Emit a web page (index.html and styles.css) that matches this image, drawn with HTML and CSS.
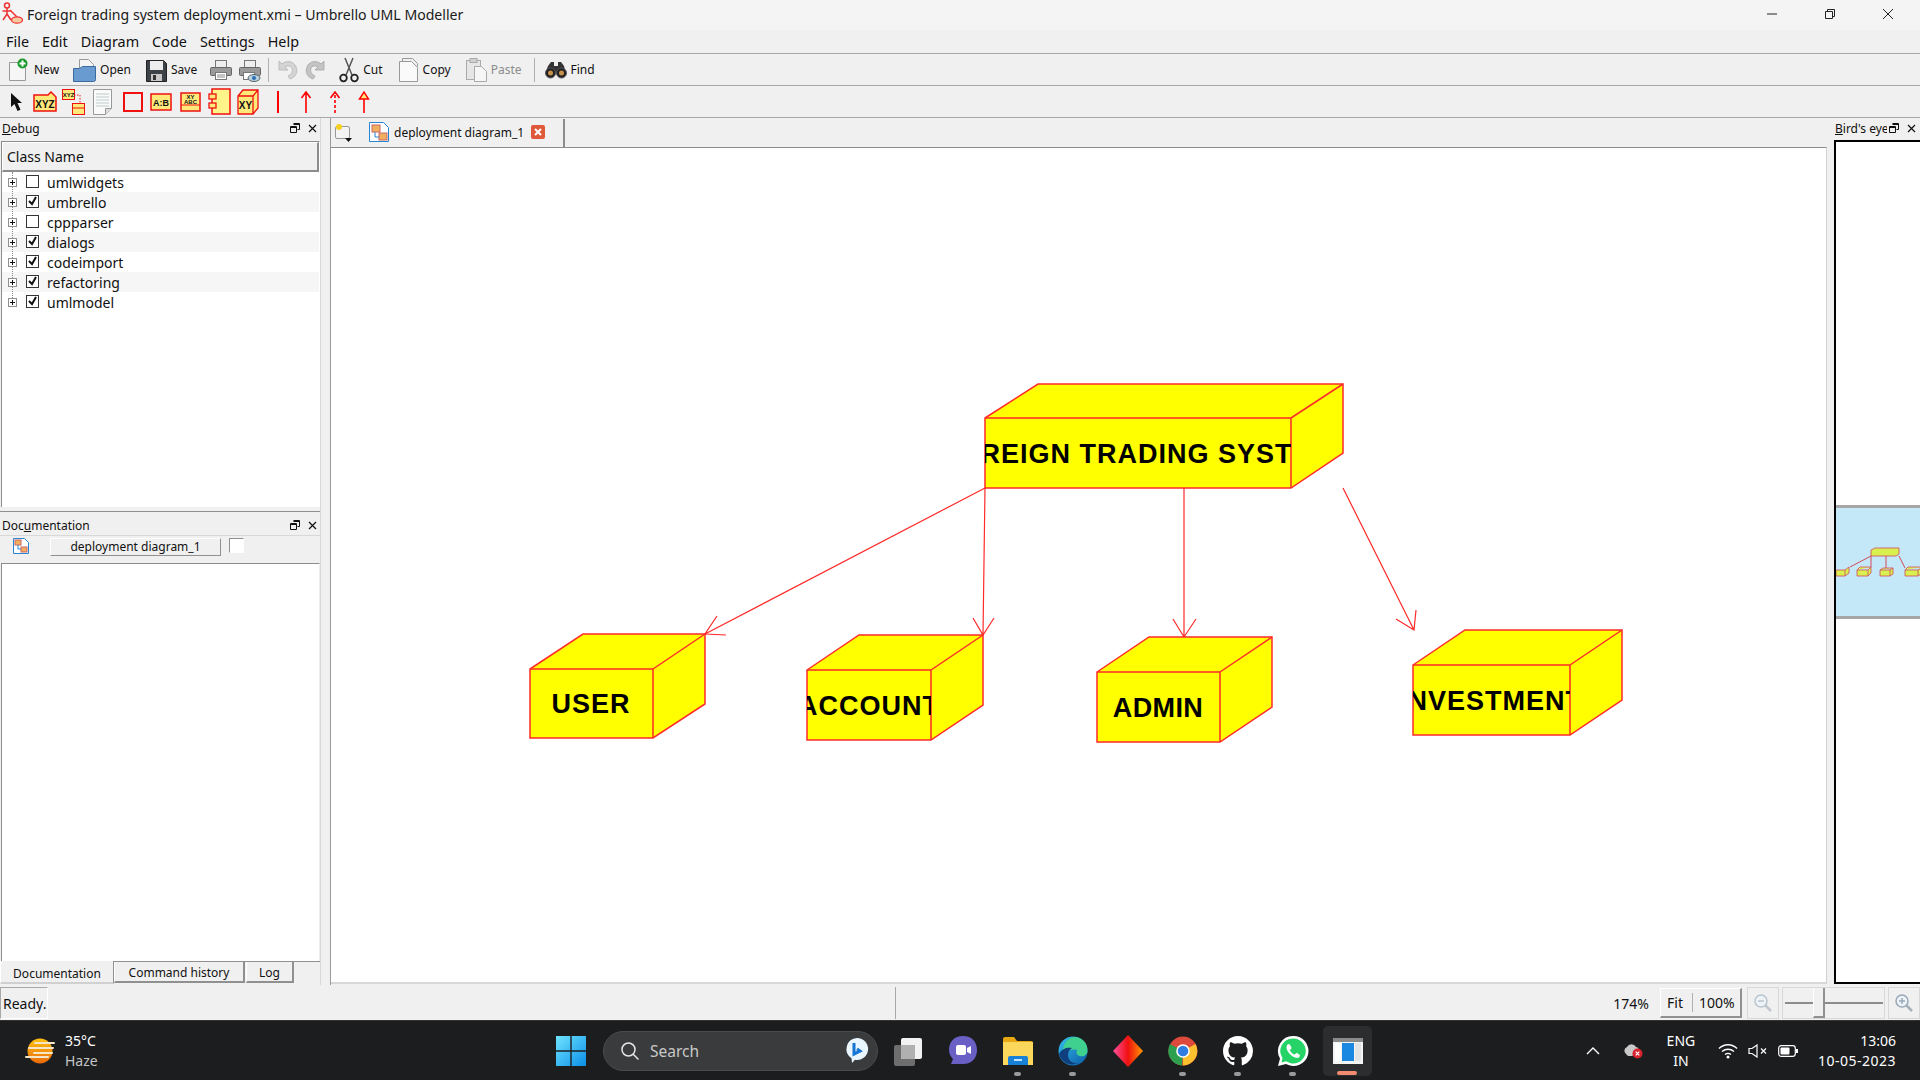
FILE: index.html
```html
<!DOCTYPE html>
<html lang="en">
<head>
    <meta charset="UTF-8">
    <title>Foreign trading system deployment.xmi – Umbrello UML Modeller</title>
    <link rel="stylesheet" href="styles.css">
</head>
<body>

    <!-- Title bar -->
    <div class="titlebar">
        <svg class="app-icon" width="24" height="24" viewBox="0 0 24 24"><circle cx="6" cy="3.5" r="2.5" fill="none" stroke="#e33" stroke-width="1.5"/><path d="M6 6v6M1.5 9h9M6 12l-4 6M6 12l4 6M9 8l7 7" fill="none" stroke="#e33" stroke-width="1.5"/><ellipse cx="16" cy="18" rx="5.5" ry="3.2" fill="#f6c9a0" stroke="#e33" stroke-width="1.3"/></svg>
        <span class="title-text">Foreign trading system deployment.xmi – Umbrello UML Modeller</span>
        <div class="window-controls">
            <svg width="12" height="12" viewBox="0 0 12 12"><path d="M1 6h10" stroke="#222" stroke-width="1"/></svg>
            <svg width="12" height="12" viewBox="0 0 12 12"><path d="M1.5 3.5h7v7h-7zM3.5 3.5v-2h7v7h-2" fill="none" stroke="#222" stroke-width="1"/></svg>
            <svg width="12" height="12" viewBox="0 0 12 12"><path d="M1 1l10 10M11 1L1 11" stroke="#222" stroke-width="1"/></svg>
        </div>
    </div>

    <!-- Menu -->
    <div class="menubar">
        <span>File</span><span>Edit</span><span>Diagram</span><span>Code</span><span>Settings</span><span>Help</span>
    </div>

    <!-- Main toolbar -->
    <div class="toolbar">
        <div class="tool tool-new">
            <svg width="22" height="24" viewBox="0 0 22 24"><path d="M1.5 4.5h11l5 5v13h-16z" fill="#f6f6f6" stroke="#999"/><circle cx="14.5" cy="5.500" r="5" fill="#1a9a2c"/><path d="M14.5 2.5v6M11.5 5.500h6" stroke="#fff" stroke-width="2"/></svg>
            <span>New</span>
        </div>
        <div class="tool tool-open">
            <svg width="23" height="24" viewBox="0 0 23 24"><path d="M6.5 1.5h9l5 5v8h-14z" fill="#f4f4f4" stroke="#999"/><path d="M.5 10.5h6l3-2h13v13a2 2 0 0 1-2 2H.5z" fill="#6a9bd0" stroke="#3b6aa0"/></svg>
            <span>Open</span>
        </div>
        <div class="tool tool-save">
            <svg width="21" height="24" viewBox="0 0 21 24"><path d="M.5 2.5h17l3 3v18H.5z" fill="#3d4248" stroke="#222"/><rect x="4" y="3" width="13" height="9" fill="#eee"/><rect x="5" y="16" width="11" height="7" fill="#c8c8c8"/><rect x="7" y="17" width="3" height="5" fill="#333"/></svg>
            <span>Save</span>
        </div>
        <svg class="tool-print" width="22" height="24" viewBox="0 0 22 24"><rect x="5.5" y="2.5" width="11" height="8" fill="#eee" stroke="#777"/><rect x=".5" y="9.5" width="21" height="8" rx="1" fill="#9a9a9a" stroke="#666"/><rect x="5.5" y="14.5" width="11" height="7" fill="#fff" stroke="#777"/><path d="M7 17h8M7 19h8" stroke="#888"/></svg>
        <svg class="tool-preview" width="22" height="24" viewBox="0 0 22 24"><rect x="5.5" y="2.5" width="11" height="8" fill="#eee" stroke="#777"/><rect x=".5" y="9.5" width="21" height="8" rx="1" fill="#9a9a9a" stroke="#666"/><rect x="4.5" y="14.5" width="11" height="7" fill="#fff" stroke="#777"/><ellipse cx="15" cy="20" rx="6" ry="3.5" fill="#b8cfe0" stroke="#566"/><circle cx="15" cy="20" r="2" fill="#2a6fb0"/></svg>
        <div class="sep sep-a"></div>
        <svg class="tool-undo" width="22" height="22" viewBox="0 0 22 22"><path d="M3 2v9h9L9 8c3-2 6-1 7 1 1 3 0 6-4 8l2 3c6-2 8-7 6-12C18 2 10 1 6 5z" fill="#d4d4d4" stroke="#bdbdbd"/></svg>
        <svg class="tool-redo" width="22" height="22" viewBox="0 0 22 22"><path d="M19 2v9h-9l3-3c-3-2-6-1-7 1-1 3 0 6 4 8l-2 3C2 18 0 13 2 8 4 2 12 1 16 5z" fill="#c4c4c4" stroke="#b0b0b0"/></svg>
        <div class="tool tool-cut">
            <svg width="20" height="26" viewBox="0 0 20 26"><path d="M6 1l7 17M14 1L7 18" stroke="#555" stroke-width="1.5" fill="none"/><circle cx="4.5" cy="21" r="3.3" fill="none" stroke="#222" stroke-width="1.8"/><circle cx="15.5" cy="21" r="3.3" fill="none" stroke="#222" stroke-width="1.8"/></svg>
            <span>Cut</span>
        </div>
        <div class="tool tool-copy">
            <svg width="20" height="24" viewBox="0 0 20 24"><path d="M3.5 3.5v-3h10l5 5v3" fill="none" stroke="#999"/><path d="M.5 3.5h12l6 6v14H.5z" fill="#fafafa" stroke="#999"/></svg>
            <span>Copy</span>
        </div>
        <div class="tool tool-paste disabled">
            <svg width="21" height="24" viewBox="0 0 21 24"><rect x=".5" y="2.5" width="14" height="19" fill="#e6e6e6" stroke="#aaa"/><rect x="4" y=".5" width="7" height="4" fill="#d0d0d0" stroke="#aaa"/><path d="M8.5 8.5h7l5 5v10h-12z" fill="#f6f6f6" stroke="#aaa"/></svg>
            <span>Paste</span>
        </div>
        <div class="sep sep-b"></div>
        <div class="tool tool-find">
            <svg width="22" height="18" viewBox="0 0 22 18"><path d="M3 5l3-4h3v4h4V1h3l3 4 2 8H0z" fill="#333"/><circle cx="5.5" cy="12" r="5" fill="#222" stroke="#555"/><circle cx="16.5" cy="12" r="5" fill="#222" stroke="#555"/><circle cx="5.5" cy="12" r="2.5" fill="#c7924b"/><circle cx="16.5" cy="12" r="2.5" fill="#c7924b"/></svg>
            <span>Find</span>
        </div>
    </div>

    <!-- Diagram toolbar -->
    <div class="toolbar toolbar-diagram">
        <svg class="dt-arrow" width="14" height="20" viewBox="0 0 14 20"><path d="M1 1v14l3.5-3 3 7 3-1.300-3-6.700H12z" fill="#111"/></svg>
        <svg class="dt-xyz" width="24" height="22" viewBox="0 0 24 22"><path d="M1 4h14l3-3 5 5v14H1z" fill="#ffe97a" stroke="#e11" stroke-width="1.5"/><text x="12" y="17" class="icon-text-lg">XYZ</text></svg>
        <svg class="dt-inst" width="23" height="26" viewBox="0 0 23 26"><rect x=".5" y=".5" width="12" height="10" fill="#ffe97a" stroke="#e11"/><text x="6.5" y="8" class="icon-text-sm">XYZ</text><path d="M12 6h6v8" fill="none" stroke="#e11" stroke-dasharray="1.5 1.5"/><rect x="10.5" y="14.5" width="12" height="11" fill="#ffe97a" stroke="#e11"/><path d="M11 19h11" stroke="#e11"/></svg>
        <svg class="dt-note" width="20" height="26" viewBox="0 0 20 26"><path d="M.5.5h18v19l-6 6H.5z" fill="#fafafa" stroke="#999"/><path d="M3 5h13M3 8h13M3 11h13M3 14h13M3 17h13" stroke="#bcc"/><path d="M12.5 25.5v-6h6" fill="#ddd" stroke="#999"/></svg>
        <div class="dt-box"></div>
        <svg class="dt-ab" width="22" height="18" viewBox="0 0 22 18"><rect x="1" y="1" width="20" height="16" fill="#ffe97a" stroke="#e11" stroke-width="1.5"/><text x="11" y="12.5" class="icon-text-md">A:B</text></svg>
        <svg class="dt-abc" width="21" height="20" viewBox="0 0 21 20"><rect x="1" y="1" width="19" height="18" fill="#ffe97a" stroke="#e11" stroke-width="1.5"/><path d="M1 13h19" stroke="#e11"/><text x="10.5" y="7" class="icon-text-sm">XY</text><text x="10.5" y="12" class="icon-text-sm">ABC</text></svg>
        <svg class="dt-comp" width="23" height="27" viewBox="0 0 23 27"><rect x="4" y="1" width="18" height="25" fill="#fff48a" stroke="#e11" stroke-width="1.5"/><rect x="1" y="6" width="7" height="5" fill="#ffe97a" stroke="#e11" stroke-width="1.3"/><rect x="1" y="15" width="7" height="5" fill="#ffe97a" stroke="#e11" stroke-width="1.3"/></svg>
        <svg class="dt-node" width="22" height="26" viewBox="0 0 22 26"><path d="M1 7h15v18H1zM1 7l5-6h15v18l-5 6M16 7l5-6" fill="#ffe97a" stroke="#e11" stroke-width="1.3"/><text x="8.5" y="20" class="icon-text-lg">XY</text></svg>
        <div class="dt-line"></div>
        <svg class="dt-assoc" width="12" height="22" viewBox="0 0 12 22"><path d="M6 22V1M1.5 7L6 1l4.500 6" fill="none" stroke="#f00" stroke-width="1.6"/></svg>
        <svg class="dt-dep" width="12" height="22" viewBox="0 0 12 22"><path d="M6 22V1" stroke="#f00" stroke-width="1.6" stroke-dasharray="3 2"/><path d="M1.5 7L6 1l4.500 6" fill="none" stroke="#f00" stroke-width="1.6"/></svg>
        <svg class="dt-gen" width="12" height="22" viewBox="0 0 12 22"><path d="M6 22V8" stroke="#f00" stroke-width="1.6"/><path d="M1.5 8L6 1l4.500 7z" fill="#ffe97a" stroke="#f00" stroke-width="1.4"/></svg>
    </div>

    <div class="workspace">

        <!-- Left docks -->
        <div class="left-docks">
            <div class="dock-title">
                <span><u>D</u>ebug</span>
                <div class="dock-btns">
                    <svg width="10" height="10" viewBox="0 0 10 10"><path d="M3.5 .5h6v6h-2M.5 3.5h6v6h-6z" fill="none" stroke="#111"/><path d="M3.5 1.5h6M.5 4.5h6" stroke="#111"/></svg>
                    <svg width="9" height="9" viewBox="0 0 9 9"><path d="M1 1l7 7M8 1L1 8" stroke="#111" stroke-width="1.2"/></svg>
                </div>
            </div>
            <div class="debug-body">
                <div class="list-header">Class Name</div>
                <div class="tree">
                    <div class="tree-row"><i class="expander"></i><i class="check"></i><span>umlwidgets</span></div>
                    <div class="tree-row"><i class="expander"></i><i class="check on"></i><span>umbrello</span></div>
                    <div class="tree-row"><i class="expander"></i><i class="check"></i><span>cppparser</span></div>
                    <div class="tree-row"><i class="expander"></i><i class="check on"></i><span>dialogs</span></div>
                    <div class="tree-row"><i class="expander"></i><i class="check on"></i><span>codeimport</span></div>
                    <div class="tree-row"><i class="expander"></i><i class="check on"></i><span>refactoring</span></div>
                    <div class="tree-row"><i class="expander"></i><i class="check on"></i><span>umlmodel</span></div>
                </div>
            </div>
            <div class="dock-split"></div>
            <div class="dock-title dock-title-doc">
                <span>Doc<u>u</u>mentation</span>
                <div class="dock-btns">
                    <svg width="10" height="10" viewBox="0 0 10 10"><path d="M3.5 .5h6v6h-2M.5 3.5h6v6h-6z" fill="none" stroke="#111"/><path d="M3.5 1.5h6M.5 4.5h6" stroke="#111"/></svg>
                    <svg width="9" height="9" viewBox="0 0 9 9"><path d="M1 1l7 7M8 1L1 8" stroke="#111" stroke-width="1.2"/></svg>
                </div>
            </div>
            <div class="doc-head">
                <svg class="diagram-icon" width="16" height="16" viewBox="0 0 16 16"><path d="M.5.5h11l4 4v11H.5z" fill="#fff" stroke="#2a85d0"/><rect x="2" y="2" width="6" height="5" fill="#f0b060" stroke="#c66"/><rect x="8" y="9" width="6" height="5" fill="#f0b060" stroke="#c66"/><path d="M5 7v4h3" fill="none" stroke="#2a85d0"/></svg>
                <div class="doc-name">deployment diagram_1</div>
                <div class="doc-check"></div>
            </div>
            <div class="doc-body"></div>
            <div class="dock-tabs">
                <div class="dock-tab active">Documentation</div>
                <div class="dock-tab tab-history">Command history</div>
                <div class="dock-tab tab-log">Log</div>
            </div>
        </div>

        <!-- Diagram area -->
        <div class="center">
            <div class="tabbar">
                <svg class="new-tab" width="20" height="20" viewBox="0 0 20 20"><rect x="1.5" y="3.5" width="14" height="12" rx="1.5" fill="#f4f4f4" stroke="#999"/><circle cx="5" cy="4" r="3" fill="#f5d020"/><path d="M11 15h7l-3.500 4z" fill="#111"/></svg>
                <div class="diagram-tab">
                    <svg width="20" height="20" viewBox="0 0 20 20"><path d="M.5.5h14l5 5v14H.5z" fill="#fff" stroke="#2a85d0"/><rect x="3" y="3" width="8" height="7" fill="#f0b060" stroke="#c66"/><rect x="10" y="11" width="8" height="7" fill="#f0b060" stroke="#c66"/><path d="M6 10v5h4" fill="none" stroke="#2a85d0"/></svg>
                    <span>deployment diagram_1</span>
                    <svg class="tab-close" width="14" height="14" viewBox="0 0 14 14"><rect width="14" height="14" rx="2" fill="#e0583a"/><path d="M4 4l6 6M10 4l-6 6" stroke="#fff" stroke-width="2"/></svg>
                </div>
            </div>
            <div class="canvas">
                <svg class="diagram" width="1495" height="835" viewBox="331 148 1495 835">
                    <defs>
                        <clipPath id="c-main"><rect x="985" y="418" width="306" height="70"/></clipPath>
                        <clipPath id="c-user"><rect x="530" y="669" width="123" height="69"/></clipPath>
                        <clipPath id="c-acc"><rect x="807" y="670" width="124" height="70"/></clipPath>
                        <clipPath id="c-adm"><rect x="1097" y="672" width="123" height="70"/></clipPath>
                        <clipPath id="c-inv"><rect x="1413" y="665" width="157" height="70"/></clipPath>
                    </defs>

                    <!-- associations -->
                    <g class="assoc">
                        <path d="M985 488L705 634M717 616L705 634L726 635"/>
                        <path d="M985 488L983 635M973 618L983 635L994 618"/>
                        <path d="M1184 488V637M1173 619L1184 637L1196 619"/>
                        <path d="M1343 488L1414 630M1396 619L1414 630L1416 610"/>
                    </g>

                    <!-- nodes -->
                    <g class="node">
                        <path d="M985 418L1038 384H1343V453L1291 488H985Z"/>
                        <path d="M985 418H1291V488M1291 418L1343 384"/>
                        <text class="node-name" x="1138" y="463" clip-path="url(#c-main)">FOREIGN TRADING SYSTEM</text>
                    </g>
                    <g class="node">
                        <path d="M530 669L583 634H705V704L653 738H530Z"/>
                        <path d="M530 669H653V738M653 669L705 634"/>
                        <text class="node-name" x="591" y="713" clip-path="url(#c-user)">USER</text>
                    </g>
                    <g class="node">
                        <path d="M807 670L859 635H983V705L931 740H807Z"/>
                        <path d="M807 670H931V740M931 670L983 635"/>
                        <text class="node-name" x="869" y="715" clip-path="url(#c-acc)">ACCOUNT</text>
                    </g>
                    <g class="node">
                        <path d="M1097 672L1149 637H1272V707L1220 742H1097Z"/>
                        <path d="M1097 672H1220V742M1220 672L1272 637"/>
                        <text class="node-name name-tight" x="1158" y="717" clip-path="url(#c-adm)">ADMIN</text>
                    </g>
                    <g class="node">
                        <path d="M1413 665L1465 630H1622V700L1570 735H1413Z"/>
                        <path d="M1413 665H1570V735M1570 665L1622 630"/>
                        <text class="node-name" x="1491" y="710" clip-path="url(#c-inv)">INVESTMENT</text>
                    </g>
                </svg>
            </div>
        </div>

        <!-- Bird's eye -->
        <div class="birds-eye">
            <div class="dock-title bird-title">
                <span class="bird-label"><u>B</u>ird's eye</span>
                <div class="dock-btns">
                    <svg width="10" height="10" viewBox="0 0 10 10"><path d="M3.5 .5h6v6h-2M.5 3.5h6v6h-6z" fill="none" stroke="#111"/><path d="M3.5 1.5h6M.5 4.5h6" stroke="#111"/></svg>
                    <svg width="9" height="9" viewBox="0 0 9 9"><path d="M1 1l7 7M8 1L1 8" stroke="#111" stroke-width="1.2"/></svg>
                </div>
            </div>
            <div class="bird-view">
                <div class="bird-blank bird-top"></div>
                <div class="bird-focus">
                    <svg width="85" height="108" viewBox="1835 507 85 108">
                        <g class="mini-links"><path d="M1870 555L1849 566M1870 555V566M1885 555V567M1898 555L1904 567"/></g>
                        <g class="mini-node"><path d="M1870 549L1874 547H1898V553L1895 555H1870Z"/><path d="M1835 569H1844V575H1835ZM1844 569L1848 566V572L1844 575"/><path d="M1856 569H1867V575H1856ZM1867 569L1870 566V572L1867 575M1856 569L1859 566H1870"/><path d="M1879 569H1889V575H1879ZM1889 569L1892 567V573L1889 575M1879 569L1882 567H1892"/><path d="M1904 569H1917V575H1904ZM1917 569L1920 567V573L1917 575M1904 569L1907 566H1920"/></g>
                    </svg>
                </div>
                <div class="bird-blank"></div>
            </div>
        </div>
    </div>

    <!-- Status bar -->
    <div class="statusbar">
        <div class="status-msg">Ready.</div>
        <div class="status-fill"></div>
        <div class="zoom-pct">174%</div>
        <div class="zoom-fit"><span>Fit</span><span class="zoom-100">100%</span></div>
        <div class="zoom-btn"><svg width="20" height="20" viewBox="0 0 20 20"><circle cx="8" cy="8" r="6" fill="#eef3f8" stroke="#b8c4ce" stroke-width="1.5"/><path d="M5 8h6" stroke="#b8c4ce" stroke-width="1.5"/><path d="M12.5 12.5L18 18" stroke="#c0c6cc" stroke-width="2.5"/></svg></div>
        <div class="zoom-slider"><div class="zoom-knob"></div></div>
        <div class="zoom-btn zoom-btn-in"><svg width="20" height="20" viewBox="0 0 20 20"><circle cx="8" cy="8" r="6" fill="#eef3f8" stroke="#98a8b8" stroke-width="1.5"/><path d="M5 8h6M8 5v6" stroke="#98a8b8" stroke-width="1.5"/><path d="M12.5 12.5L18 18" stroke="#a8b0b8" stroke-width="2.5"/></svg></div>
    </div>

    <!-- Windows taskbar -->
    <div class="taskbar">
        <div class="weather">
            <svg width="30" height="28" viewBox="0 0 30 28"><defs><linearGradient id="sun" x1="0" y1="0" x2="0" y2="1"><stop offset="0" stop-color="#ffc20e"/><stop offset="1" stop-color="#e8690c"/></linearGradient></defs><circle cx="15" cy="14" r="12.5" fill="url(#sun)"/><path d="M10 6h19M4 11h24M9 16h18M1 20h22" stroke="#f4e6c6" stroke-width="2" stroke-linecap="round"/></svg>
            <div class="weather-text"><div>35°C</div><div class="muted">Haze</div></div>
        </div>
        <div class="task-center">
            <svg class="win-logo" width="30" height="30" viewBox="0 0 30 30"><defs><linearGradient id="win" x1="0" y1="0" x2="1" y2="1"><stop offset="0" stop-color="#6fe4ff"/><stop offset="1" stop-color="#0a8fe8"/></linearGradient></defs><path d="M0 0h14.3v14.3H0zM15.7 0H30v14.3H15.7zM0 15.7h14.3V30H0zM15.7 15.7H30V30H15.7z" fill="url(#win)"/></svg>
            <div class="search-pill">
                <svg width="20" height="20" viewBox="0 0 20 20"><circle cx="8.5" cy="8.5" r="6.5" fill="none" stroke="#e6e6e6" stroke-width="1.5"/><path d="M13 13l5.5 5.5" stroke="#e6e6e6" stroke-width="1.5"/></svg>
                <span>Search</span>
                <svg class="bing" width="26" height="27" viewBox="0 0 26 27"><path d="M13 1a11 11 0 1 1-2 21.800l-3 3.200-.5-4.800A11 11 0 0 1 13 1z" fill="#eaf6ff"/><path d="M10 6v11l6-3-3-2" fill="none" stroke="#1574d4" stroke-width="3"/></svg>
            </div>
            <div class="task-icon">
                <svg width="30" height="30" viewBox="0 0 30 30"><rect x="1" y="9" width="21" height="21" rx="2" fill="#6e6e6e"/><rect x="8" y="2" width="21" height="21" rx="2" fill="#f2f2f2"/><rect x="8" y="9" width="14" height="14" fill="#b0b0b0"/></svg>
            </div>
            <div class="task-icon">
                <svg width="30" height="32" viewBox="0 0 30 32"><path d="M15 1c9 0 14 6 14 14s-5 14-14 14H3l2-5c-3-3-4-6-4-9C1 7 6 1 15 1z" fill="#6a5fc4"/><rect x="8" y="10" width="10" height="10" rx="2" fill="#fff"/><path d="M19 13l4-2v8l-4-2z" fill="#fff"/></svg>
            </div>
            <div class="task-icon running">
                <svg width="30" height="30" viewBox="0 0 30 30"><path d="M0 3a2 2 0 0 1 2-2h9l3 4h14a2 2 0 0 1 2 2v21H0z" fill="#e9a713"/><rect y="6" width="30" height="23" fill="#fbd75b"/><path d="M5 29v-7a2 2 0 0 1 2-2h16a2 2 0 0 1 2 2v7z" fill="#1681d6"/><path d="M11 24h8" stroke="#bfe3ff" stroke-width="2"/></svg>
            </div>
            <div class="task-icon running">
                <svg width="30" height="30" viewBox="0 0 30 30"><defs><linearGradient id="edge" x1="0" y1="0" x2="1" y2="1"><stop offset="0" stop-color="#35c1f1"/><stop offset="1" stop-color="#0c59a4"/></linearGradient></defs><circle cx="15" cy="15" r="14.5" fill="url(#edge)"/><path d="M16 1C24 1 30 7 29.500 15c0 4-4 6-8 5-3-1-4-4-2-6-6-2-13 1-14 8C3 13 7 2 16 1z" fill="#3fcf8e"/><path d="M10 19c0 5 4 9 10 8-8 4-17-1-19-9 3-6 9-7 13-6-3 2-4 4-4 7z" fill="#0f3f7e"/></svg>
            </div>
            <div class="task-icon">
                <svg width="30" height="32" viewBox="0 0 30 32"><defs><linearGradient id="dia" x1="0" y1="0" x2="1" y2="0"><stop offset="0" stop-color="#ff4fa0"/><stop offset=".5" stop-color="#f01010"/><stop offset="1" stop-color="#ff9a00"/></linearGradient></defs><path d="M15 0l15 16-15 16L0 16z" fill="url(#dia)"/></svg>
            </div>
            <div class="task-icon running">
                <svg width="30" height="30" viewBox="0 0 30 30"><circle cx="15" cy="15" r="14.5" fill="#dd4a3b"/><path d="M15 15L27.5 8a14.5 14.5 0 0 1-12.500 21.500z" fill="#fbc02d"/><path d="M15 15l-1 14.500A14.500 14.500 0 0 1 2 8z" fill="#2e9e4f"/><circle cx="15" cy="15" r="6.8" fill="#fff"/><circle cx="15" cy="15" r="5.3" fill="#2f7de1"/></svg>
            </div>
            <div class="task-icon running">
                <svg width="30" height="30" viewBox="0 0 16 16"><path fill="#fff" d="M8 0C3.580 0 0 3.580 0 8c0 3.540 2.290 6.530 5.470 7.590.4.070.55-.17.55-.38 0-.19-.01-.82-.01-1.490-2.010.37-2.530-.49-2.690-.94-.09-.23-.48-.94-.82-1.130-.28-.15-.68-.52-.01-.53.630-.01 1.080.580 1.230.820.720 1.210 1.870.870 2.330.660.070-.520.280-.870.510-1.070-1.780-.2-3.640-.89-3.640-3.950 0-.870.310-1.590.820-2.150-.080-.2-.360-1.020.080-2.120 0 0 .670-.210 2.200.820.640-.180 1.320-.270 2-.270s1.360.090 2 .270c1.530-1.040 2.200-.820 2.200-.820.440 1.100.160 1.920.080 2.120.510.560.820 1.270.820 2.150 0 3.070-1.870 3.750-3.650 3.950.290.250.540.730.540 1.480 0 1.070-.010 1.930-.010 2.200 0 .210.150.460.550.380A8.010 8.010 0 0 0 16 8c0-4.420-3.580-8-8-8z"/></svg>
            </div>
            <div class="task-icon running">
                <svg width="32" height="32" viewBox="0 0 32 32"><path d="M16 1a15 15 0 0 0-13 22.500L1 31l8-2A15 15 0 1 0 16 1z" fill="#fff"/><path d="M16 3.500A12.500 12.500 0 0 0 5.500 23l-1 4.500 4.700-1.200A12.500 12.500 0 1 0 16 3.500z" fill="#25d366"/><path d="M11.500 9c-1 0-2 2-2 3.500 0 4 5.500 10 10.500 10.500 1.500 0 3-1.500 3-2.500 0-1-3-2.500-3.500-2.500s-1.500 1.500-2 1.500c-1.500 0-4.500-3-4.500-4.500 0-.5 1.500-1 1.500-2s-1.500-4-3-4z" fill="#fff"/></svg>
            </div>
            <div class="task-icon active">
                <svg width="30" height="26" viewBox="0 0 30 26"><rect width="30" height="26" fill="#f4f4f4"/><rect width="30" height="4" fill="#8a8a8a"/><rect x="2" y="5" width="6" height="18" fill="#fff"/><rect x="9" y="5" width="12" height="18" fill="#1a88e0"/><rect x="22" y="5" width="6" height="18" fill="#e4e4e4"/></svg>
            </div>
        </div>
        <div class="tray">
            <svg class="tray-chev" width="14" height="8" viewBox="0 0 14 8"><path d="M1 7l6-6 6 6" fill="none" stroke="#fff" stroke-width="1.4"/></svg>
            <svg class="tray-cloud" width="20" height="16" viewBox="0 0 20 16"><path d="M3 11a4 4 0 0 1 1-7 5 5 0 0 1 9 0 3 3 0 0 1 2 5l-6 4H5z" fill="#c8c8c8"/><circle cx="14.5" cy="10.5" r="5" fill="#d8232f"/><path d="M12.700 8.700l3.600 3.600M16.300 8.700l-3.600 3.600" stroke="#fff" stroke-width="1.2"/></svg>
            <div class="tray-lang"><div>ENG</div><div>IN</div></div>
            <svg class="tray-wifi" width="20" height="16" viewBox="0 0 20 16"><path d="M1 5.500c5-5 13-5 18 0M4 8.500c3.500-3 8.500-3 12 0M7 11.500c2-1.500 4-1.500 6 0" fill="none" stroke="#fff" stroke-width="1.4"/><circle cx="10" cy="14" r="1.5" fill="#fff"/></svg>
            <svg class="tray-vol" width="20" height="14" viewBox="0 0 20 14"><path d="M1 4.500h3L9 1v12L4 9.500H1z" fill="none" stroke="#fff" stroke-width="1.2"/><path d="M13 4.500l5 5M18 4.500l-5 5" stroke="#fff" stroke-width="1.2"/></svg>
            <svg class="tray-batt" width="20" height="12" viewBox="0 0 20 12"><rect x=".7" y=".7" width="16.6" height="10.6" rx="2.5" fill="none" stroke="#fff" stroke-width="1.2"/><rect x="2.5" y="2.5" width="9" height="7" rx="1" fill="#fff"/><rect x="18" y="4" width="2" height="4" fill="#fff"/></svg>
            <div class="tray-clock"><div>13:06</div><div class="tray-date">10-05-2023</div></div>
        </div>
    </div>

</body>
</html>
```

FILE: styles.css
```css
* {
    box-sizing: border-box;
}

body {
    width: 1920px;
    height: 1080px;
    margin: 0;
    overflow: hidden;
    display: flex;
    flex-direction: column;
    background-color: #f0f0f0;
    font-family: "Noto Sans", "Open Sans", sans-serif;
    color: #111;
}

svg {
    display: block;
    flex: none;
}

/* title bar */
.titlebar {
    height: 30px;
    display: flex;
    align-items: center;
    padding: 0 0 2px 1px;
    background-color: #f4f4f4;
    font-size: 14.1px;
}

.title-text {
    margin-left: 2px;
    color: #1a1a1a;
}

.window-controls {
    margin-left: auto;
    display: flex;
    gap: 46px;
    padding-right: 26px;
}

/* menu */
.menubar {
    height: 24px;
    display: flex;
    align-items: center;
    padding: 0 0 1px 6px;
    font-size: 14.4px;
    gap: 13px;
    border-bottom: 1px solid #a8a8a8;
}

/* toolbars */
.toolbar {
    height: 32px;
    display: flex;
    align-items: center;
    padding-left: 8px;
    font-size: 12px;
    border-bottom: 1px solid #a8a8a8;
}

.tool {
    display: flex;
    align-items: center;
    gap: 4px;
}

.tool-open { margin-left: 14px; }
.tool-save { margin-left: 15px; }
.tool-print { margin-left: 13px; }
.tool-preview { margin-left: 7px; }
.tool-undo { margin-left: 7px; }
.tool-redo { margin-left: 7px; }
.tool-cut { margin-left: 12px; }
.tool-copy { margin-left: 16px; }
.tool-paste { margin-left: 15px; }
.tool-find { margin-left: 10px; }

.disabled {
    color: #8c8c8c;
}

.sep {
    width: 1px;
    height: 24px;
    background-color: #b0b0b0;
}

.sep-a { margin-left: 7px; }
.sep-b { margin-left: 12px; }

.toolbar-diagram {
    padding-left: 10px;
}

.dt-xyz { margin-left: 9px; }
.dt-inst { margin-left: 5px; }
.dt-note { margin-left: 8px; }
.dt-ab { margin-left: 7px; }
.dt-abc { margin-left: 8px; }
.dt-comp { margin-left: 7px; }
.dt-node { margin-left: 6px; }
.dt-assoc { margin-left: 21px; }
.dt-dep { margin-left: 17px; }
.dt-gen { margin-left: 17px; }

.dt-box {
    width: 20px;
    height: 20px;
    margin-left: 10px;
    border: 2px solid #f01010;
}

.dt-line {
    width: 2px;
    height: 22px;
    margin-left: 18px;
    background-color: #f00;
}

.icon-text-lg,
.icon-text-md,
.icon-text-sm {
    font-family: "Liberation Sans", sans-serif;
    font-weight: bold;
    text-anchor: middle;
    fill: #111;
}

.icon-text-lg { font-size: 10px; }
.icon-text-md { font-size: 9px; }
.icon-text-sm { font-size: 6px; }

/* workspace */
.workspace {
    flex: 1;
    display: flex;
    min-height: 0;
}

.left-docks {
    width: 321px;
    flex: none;
    display: flex;
    flex-direction: column;
    border-right: 1px solid #d8d8d8;
}

.dock-title {
    height: 20px;
    flex: none;
    display: flex;
    align-items: center;
    justify-content: space-between;
    padding: 0 3px 0 2px;
    font-size: 12px;
}

.dock-btns {
    display: flex;
    align-items: center;
    gap: 8px;
}

.debug-body {
    height: 366px;
    flex: none;
    margin-left: 1px;
    margin-top: 3px;
    background-color: #fff;
    border-left: 1px solid #8c8c8c;
    border-top: 1px solid #8c8c8c;
    border-right: 1px solid #fff;
}

.list-header {
    height: 30px;
    display: flex;
    align-items: center;
    padding-left: 4px;
    font-size: 14px;
    background-color: #f0f0f0;
    border-top: 1px solid #fff;
    border-left: 1px solid #fff;
    border-right: 2px solid #8c8c8c;
    border-bottom: 2px solid #8c8c8c;
}

.tree {
    position: relative;
}

/* dotted spine of the tree */
.tree::before {
    content: "";
    position: absolute;
    left: 10px;
    top: 0;
    height: 130px;
    border-left: 1px dotted #888;
}

.tree-row {
    height: 20px;
    display: flex;
    align-items: center;
    padding-left: 6px;
    font-size: 14px;
}

.tree-row:nth-child(even) {
    background-color: #f6f6f6;
}

.expander {
    position: relative;
    width: 9px;
    height: 9px;
    border: 1px solid #909090;
    background:
        linear-gradient(#111, #111) center / 5px 1px no-repeat,
        linear-gradient(#111, #111) center / 1px 5px no-repeat,
        #fff;
}

.check {
    width: 13px;
    height: 13px;
    margin-left: 9px;
    margin-top: -2px;
    border: 1px solid #333;
    background-color: #fff;
}

.check.on {
    background:
        url("data:image/svg+xml,%3Csvg xmlns='http://www.w3.org/2000/svg' width='11' height='11'%3E%3Cpath d='M2 5l3 3 4-7' fill='none' stroke='%23111' stroke-width='2'/%3E%3C/svg%3E") center no-repeat,
        #fff;
}

.tree-row span {
    margin-left: 8px;
}

.dock-split {
    height: 6px;
    flex: none;
    margin-top: 2px;
    background: linear-gradient(#f0f0f0 2px, #909090 2px, #909090 3px, #f0f0f0 3px);
}

.dock-title-doc {
    height: 20px;
}

.doc-head {
    height: 25px;
    flex: none;
    display: flex;
    align-items: flex-start;
    padding-top: 2px;
    border-top: 1px solid #d8d8d8;
}

.diagram-icon {
    margin-left: 13px;
}

.doc-name {
    width: 171px;
    height: 18px;
    margin-left: 21px;
    font-size: 12px;
    text-align: center;
    line-height: 16px;
    border-right: 1px solid #909090;
    border-bottom: 1px solid #909090;
    border-top: 1px solid #fff;
    border-left: 1px solid #fff;
}

.doc-check {
    width: 15px;
    height: 15px;
    margin-left: 8px;
    background-color: #fff;
    border: 1px solid #909090;
    border-right-color: #fff;
    border-bottom-color: #fff;
}

.doc-body {
    flex: 1;
    margin-left: 1px;
    margin-top: 3px;
    background-color: #fff;
    border-left: 1px solid #8c8c8c;
    border-top: 1px solid #8c8c8c;
    border-right: 1px solid #eee;
}

.dock-tabs {
    height: 24px;
    flex: none;
    display: flex;
    align-items: flex-start;
    font-size: 12px;
    border-top: 1px solid #909090;
}

.dock-tab {
    height: 21px;
    text-align: center;
    line-height: 21px;
    border-right: 2px solid #909090;
    border-bottom: 2px solid #909090;
    border-left: 1px solid #fff;
}

.dock-tab.active {
    width: 114px;
    height: 23px;
    margin-top: -1px;
    line-height: 25px;
    background-color: #f0f0f0;
    border-right-width: 1px;
    border-bottom-color: #d0d0d0;
}

.tab-history { width: 131px; }
.tab-log { width: 48px; margin-left: 1px; }

/* diagram area */
.center {
    width: 1497px;
    flex: none;
    margin-left: 9px;
    margin-right: 6px;
    display: flex;
    flex-direction: column;
    border-left: 1px solid #9a9a9a;
}

.tabbar {
    height: 29px;
    flex: none;
    display: flex;
    align-items: center;
    padding-left: 3px;
    font-size: 12px;
    border-top: 1px solid #f0f0f0;
}

.diagram-tab {
    height: 28px;
    margin-left: 15px;
    display: flex;
    align-items: center;
    gap: 5px;
    padding: 0 18px 2px 0;
    border-right: 2px solid #8c8c8c;
}

.tab-close {
    margin-left: 2px;
}

.canvas {
    flex: 1;
    position: relative;
    overflow: hidden;
    background-color: #fff;
    border-top: 1px solid #8c8c8c;
    border-right: 1px solid #d0d0d0;
    border-bottom: 2px solid #d8d8d8;
    margin-bottom: 1px;
}

.diagram {
    position: absolute;
    left: 0;
    top: 0;
}

.assoc path {
    fill: none;
    stroke: #ff2a2a;
    stroke-width: 1.2px;
}

.node path {
    fill: #ffff00;
    stroke: #ff2a2a;
    stroke-width: 1.5px;
}

.node path + path {
    fill: none;
}

.node-name {
    font-family: "Liberation Sans", sans-serif;
    font-size: 27px;
    font-weight: bold;
    letter-spacing: 1px;
    text-anchor: middle;
    fill: #000;
}

.name-tight {
    letter-spacing: 0.4px;
}

/* bird's eye */
.birds-eye {
    flex: 1;
    display: flex;
    flex-direction: column;
    min-width: 0;
}

.bird-title {
    padding: 0 4px 0 2px;
}

.bird-label {
    width: 52px;
    overflow: hidden;
    white-space: nowrap;
}

.bird-view {
    flex: 1;
    margin-top: 2px;
    margin-bottom: 1px;
    margin-left: 1px;
    display: flex;
    flex-direction: column;
    background-color: #fff;
    border: 2px solid #000;
    border-right: none;
}

.bird-blank {
    flex: 1;
}

.bird-top {
    flex: none;
    height: 363px;
}

.bird-focus {
    height: 114px;
    background-color: #c5e8f8;
    border-top: 3px solid #a6a6a6;
    border-bottom: 3px solid #a6a6a6;
    box-shadow: 0 -1px 0 #fff, 0 1px 0 #fff;
}

.mini-links path {
    fill: none;
    stroke: #d24a5c;
    stroke-width: 1px;
}

.mini-node path {
    fill: #d8f050;
    stroke: #d24a5c;
    stroke-width: 0.8px;
}

/* status bar */
.statusbar {
    height: 35px;
    flex: none;
    display: flex;
    align-items: center;
    font-size: 14px;
    padding-top: 1px;
}

.status-msg {
    width: 48px;
    padding-left: 2px;
    height: 32px;
    line-height: 32px;
    border-top: 1px solid #a8a8a8;
    border-left: 1px solid #a8a8a8;
    border-right: 1px solid #fff;
    border-bottom: 1px solid #fff;
}

.status-fill {
    width: 848px;
    height: 32px;
    border-right: 1px solid #a8a8a8;
}

.zoom-pct {
    margin-left: auto;
    margin-right: 11px;
}

.zoom-fit {
    width: 82px;
    height: 30px;
    display: flex;
    align-items: center;
    border-top: 1px solid #fff;
    border-left: 1px solid #fff;
    border-right: 2px solid #909090;
    border-bottom: 2px solid #909090;
}

.zoom-fit span {
    padding-left: 6px;
    width: 31px;
}

.zoom-fit .zoom-100 {
    flex: 1;
    border-left: 1px solid #b0b0b0;
}

.zoom-btn {
    width: 32px;
    height: 32px;
    margin-left: 5px;
    display: flex;
    align-items: center;
    justify-content: center;
    border: 1px solid #d8d8d8;
}

.zoom-btn-in {
    margin-left: 3px;
}

.zoom-slider {
    position: relative;
    width: 103px;
    height: 32px;
    margin-left: 3px;
    border: 1px solid #d8d8d8;
    background: linear-gradient(#8c8c8c, #8c8c8c) center / 98px 2px no-repeat;
}

.zoom-knob {
    position: absolute;
    left: 30px;
    top: 0;
    width: 12px;
    height: 30px;
    background-color: #f0f0f0;
    border-left: 1px solid #fff;
    border-right: 2px solid #909090;
    border-bottom: 2px solid #909090;
}

/* windows taskbar */
.taskbar {
    height: 60px;
    flex: none;
    display: flex;
    align-items: center;
    position: relative;
    background-color: #1c1d1f;
    border-top: 1px solid #333;
    color: #fff;
    font-size: 14px;
}

.weather {
    width: 540px;
    display: flex;
    align-items: center;
    gap: 10px;
    padding-left: 25px;
    line-height: 20px;
}

.muted {
    color: #c4c4c4;
}

.task-center {
    display: flex;
    align-items: center;
    margin-left: 16px;
}

.search-pill {
    width: 275px;
    height: 40px;
    margin-left: 17px;
    margin-right: 2px;
    display: flex;
    align-items: center;
    gap: 10px;
    padding: 0 7px 0 16px;
    font-size: 15.5px;
    color: #c8c8c8;
    background-color: #3a3b3d;
    border: 1px solid #4a4b4d;
    border-radius: 20px;
}

.bing {
    margin-left: auto;
}

.task-icon {
    position: relative;
    width: 55px;
    height: 50px;
    display: flex;
    align-items: center;
    justify-content: center;
}

/* running-app dot under the taskbar icon */
.task-icon.running::after {
    content: "";
    position: absolute;
    left: 24px;
    bottom: 0;
    width: 7px;
    height: 4px;
    border-radius: 2px;
    background-color: #9a9a9a;
}

.task-icon.active {
    width: 49px;
    margin-left: 3px;
    background-color: #2c2d2f;
    border-radius: 5px;
}

.task-icon.active::after {
    content: "";
    position: absolute;
    left: 14px;
    bottom: 1px;
    width: 20px;
    height: 4px;
    border-radius: 2px;
    background-color: #f08a70;
}

.tray {
    margin-left: auto;
    display: flex;
    align-items: center;
    padding-right: 24px;
}

.tray-cloud { margin-left: 23px; }
.tray-lang {
    margin-left: 23px;
    width: 30px;
    text-align: center;
    line-height: 20px;
}
.tray-wifi { margin-left: 22px; }
.tray-vol { margin-left: 10px; }
.tray-batt { margin-left: 10px; }
.tray-clock {
    margin-left: 20px;
    text-align: right;
    line-height: 20px;
}
.tray-date {
    letter-spacing: 0.5px;
}
```
